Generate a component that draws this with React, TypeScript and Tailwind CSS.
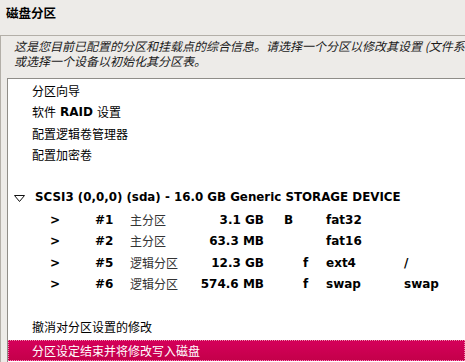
import React from "react";

const cjk = '"Noto Sans CJK SC", "DejaVu Sans", sans-serif';
const latin = '"DejaVu Sans", "Noto Sans CJK SC", sans-serif';

const partitions = [
  { num: "#1", type: "主分区", size: "3.1 GB", boot: "B", fmt: "", fs: "fat32", mount: "" },
  { num: "#2", type: "主分区", size: "63.3 MB", boot: "", fmt: "", fs: "fat16", mount: "" },
  { num: "#5", type: "逻辑分区", size: "12.3 GB", boot: "", fmt: "f", fs: "ext4", mount: "/" },
  { num: "#6", type: "逻辑分区", size: "574.6 MB", boot: "", fmt: "f", fs: "swap", mount: "swap" },
];

function Row({ children, className = "" }: { children?: React.ReactNode; className?: string }) {
  return <div className={`h-[21.5px] flex items-center whitespace-nowrap ${className}`}>{children}</div>;
}

function Expander() {
  return (
    <svg width="11" height="7" viewBox="0 0 11 7" className="ml-[3px] mr-[10px]">
      <path d="M0.5 0.5 H10.5 L5.5 6.5 Z" fill="none" stroke="#111" strokeWidth="1" />
    </svg>
  );
}

export default function App() {
  return (
    <div className="w-[465px] h-[362px] overflow-hidden bg-[#edebe8] text-[12px] text-black" style={{ fontFamily: cjk }}>
      {/* 标题 */}
      <div className="h-[35px] pl-[6px] pt-[5px] font-bold text-[12.5px] leading-[16px]">磁盘分区</div>

      {/* 外框 */}
      <div className="border-t border-l border-[#b3afa8] pl-[6px]">
        <div className="pl-[7px] pt-[2px] pb-[10px] italic text-[#1a1a1a] leading-[15px] whitespace-nowrap overflow-hidden">
          <div>这是您目前已配置的分区和挂载点的综合信息。请选择一个分区以修改其设置 (文件系</div>
          <div>或选择一个设备以初始化其分区表。</div>
        </div>

        {/* 列表 */}
        <div className="bg-white border-t border-l border-[#8f8d88] pt-[1px] h-[300px]">
          <Row className="pl-[24px]">分区向导</Row>
          <Row className="pl-[24px]">
            软件 <span className="font-bold mx-[4px]" style={{ fontFamily: latin }}>RAID</span> 设置
          </Row>
          <Row className="pl-[24px]">配置逻辑卷管理器</Row>
          <Row className="pl-[24px]">配置加密卷</Row>
          <Row />
          <Row className="pl-[3px] font-bold">
            <Expander />
            <span className="text-[11.85px]" style={{ fontFamily: latin }}>SCSI3 (0,0,0) (sda) - 16.0 GB Generic STORAGE DEVICE</span>
          </Row>
          {partitions.map((p) => (
            <Row key={p.num} className="pl-[42px]">
              <span className="w-[45px] font-bold" style={{ fontFamily: latin }}>&gt;</span>
              <span className="w-[35px] font-bold" style={{ fontFamily: latin }}>{p.num}</span>
              <span className="w-[64px] text-[#333]">{p.type}</span>
              <span className="w-[70px] text-right font-bold" style={{ fontFamily: latin }}>{p.size}</span>
              <span className="w-[20px]" />
              <span className="w-[19px] font-bold" style={{ fontFamily: latin }}>{p.boot}</span>
              <span className="w-[23px] font-bold" style={{ fontFamily: latin }}>{p.fmt}</span>
              <span className="w-[78px] font-bold" style={{ fontFamily: latin }}>{p.fs}</span>
              <span className="font-bold" style={{ fontFamily: latin }}>{p.mount}</span>
            </Row>
          ))}
          <Row />
          <Row className="pl-[24px]">撤消对分区设置的修改</Row>
          <div className="mt-[2px] h-[21px] flex items-center pl-[23px] text-white bg-gradient-to-b from-[#d5005a] to-[#c4004a] border border-dotted border-[#f08ab0] whitespace-nowrap">
            分区设定结束并将修改写入磁盘
          </div>
        </div>
      </div>
    </div>
  );
}
